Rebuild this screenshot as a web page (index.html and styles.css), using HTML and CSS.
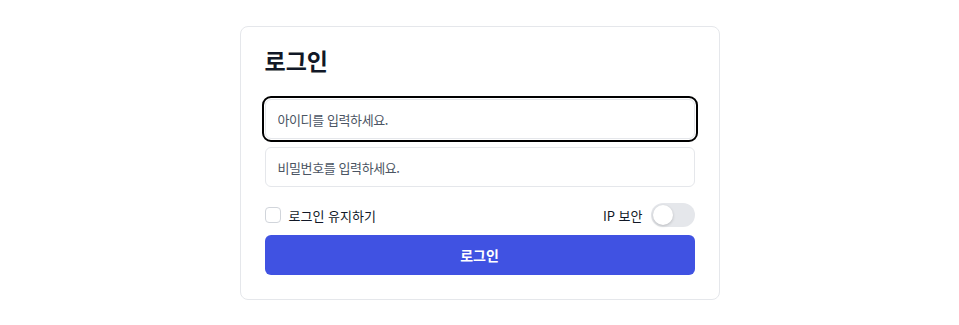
FILE: index.html
```
<!DOCTYPE html>
<html lang="ko">
<head>
<meta charset="utf-8">
<link rel="stylesheet" href="styles.css">
</head>
<body>
<div class="page">
  <form class="card">
    <h1 class="title">로그인</h1>
    <div class="fields">
      <input class="input focused" type="text" placeholder="아이디를 입력하세요.">
      <input class="input" type="password" placeholder="비밀번호를 입력하세요.">
    </div>
    <div class="options">
      <label class="remember"><span class="checkbox"></span><span>로그인 유지하기</span></label>
      <div class="ip"><span>IP 보안</span><span class="toggle"><span class="knob"></span></span></div>
    </div>
    <button class="submit" type="button">로그인</button>
  </form>
</div>
</body>
</html>
```
FILE: styles.css
```
* { box-sizing: border-box; }
html, body { margin: 0; padding: 0; background: #fff; }
body { font-family: "Noto Sans CJK KR", "Noto Sans", sans-serif; color: #111827; }
.page { display: flex; justify-content: center; padding-top: 26px; }
.card {
  width: 480px;
  border: 1px solid #e5e7eb;
  border-radius: 8px;
  padding: 24px;
  display: flex;
  flex-direction: column;
  background: #fff;
}
.title { margin: 0 0 30px; font-size: 23px; line-height: 18px; font-weight: 700; color: #111827; }
.fields { display: flex; flex-direction: column; gap: 8px; }
.input {
  height: 40px;
  width: 100%;
  border: 1px solid #e5e7eb;
  border-radius: 6px;
  padding: 0 12px;
  font-family: inherit;
  font-size: 13px;
  letter-spacing: -0.4px;
  color: #111827;
  outline: none;
  background: #fff;
}
.input::placeholder { color: #4b5563; }
.focused { outline: 2px solid #000; outline-offset: 1px; }
.options { display: flex; justify-content: space-between; align-items: center; margin-top: 16px; height: 24px; }
.remember { display: flex; align-items: center; gap: 8px; font-size: 13px; color: #111827; }
.checkbox { width: 16px; height: 16px; border: 1px solid #d1d5db; border-radius: 4px; background: #fff; }
.ip { display: flex; align-items: center; gap: 8px; font-size: 13px; color: #111827; }
.toggle { position: relative; width: 44px; height: 24px; border-radius: 12px; background: #e5e7eb; display: block; }
.knob { position: absolute; left: 2px; top: 2px; width: 20px; height: 20px; border-radius: 50%; background: #fff; box-shadow: 0 1px 3px rgba(0,0,0,0.2); }
.submit {
  margin-top: 8px;
  height: 40px;
  border: none;
  border-radius: 6px;
  background: #4052e2;
  color: #fff;
  font-family: inherit;
  font-size: 14px;
  font-weight: 700;
}
```
